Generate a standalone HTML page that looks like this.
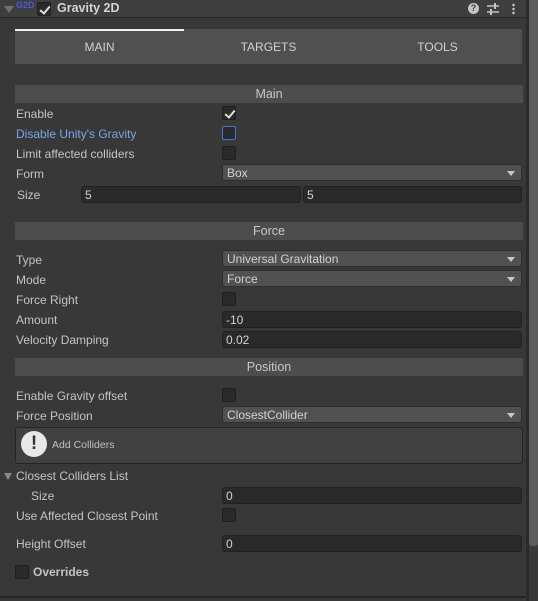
<!DOCTYPE html>
<html><head><style>
*{box-sizing:border-box;margin:0;padding:0}
body{width:538px;height:601px;background:#383838;font-family:"Liberation Sans",sans-serif;font-size:12px;color:#c4c4c4;position:relative;overflow:hidden}
.a{position:absolute}
.lbl{position:absolute;left:16px;line-height:14px}
.hdr{position:absolute;left:15px;width:508px;height:18px;background:#4d4d4d;text-align:center;line-height:18px;color:#c8c8c8;font-size:12.5px}
.cb{position:absolute;left:222px;width:14px;height:14px;background:#2a2a2a;border:1px solid #1f1f1f;border-radius:2px}
.dd{position:absolute;left:222px;width:300px;height:17px;background:#515151;border:1px solid #2e2e2e;border-radius:3px;padding-left:4px;line-height:16px;color:#d2d2d2}
.dd:after{content:"";position:absolute;right:6px;top:6px;border-left:4px solid transparent;border-right:4px solid transparent;border-top:5px solid #c8c8c8}
.tf{position:absolute;width:300px;left:222px;height:17px;background:#2a2a2a;border:1px solid #212121;border-radius:3px;padding-left:3px;line-height:16px;color:#d2d2d2}
.chk:after{content:"";position:absolute;left:4px;top:1px;width:4px;height:8px;border:solid #e0e0e0;border-width:0 2px 2px 0;transform:rotate(40deg)}
</style></head><body>
<div class="a" style="left:0;top:0;width:526px;height:18px;background:#3e3e3e;border-bottom:1px solid #2a2a2a"></div>
<div class="a" style="left:4px;top:6px;border-left:5px solid transparent;border-right:5px solid transparent;border-top:7px solid #707070"></div>
<div class="a" style="left:16px;top:0px;font-size:9px;color:#4a5ad8;font-weight:bold">G2D</div>
<div class="a chk" style="left:37px;top:2px;width:14px;height:14px;background:#2a2a2a;border:1px solid #1f1f1f;border-radius:2px"></div>
<div class="a" style="left:57px;top:1px;font-size:12.5px;font-weight:bold;color:#d4d4d4">Gravity 2D</div>
<div class="a" style="left:468px;top:3px;width:11px;height:11px;border-radius:50%;background:#c4c4c4;color:#3e3e3e;font-size:9px;font-weight:bold;text-align:center;line-height:11px">?</div>
<svg class="a" style="left:487px;top:3px" width="12" height="12"><path d="M0 3h12M0 9h12" stroke="#c4c4c4" stroke-width="1.5"/><rect x="7" y="0" width="2" height="6" fill="#c4c4c4"/><rect x="3" y="6" width="2" height="6" fill="#c4c4c4"/></svg>
<div class="a" style="left:512px;top:3px;width:3px;height:12px;background:radial-gradient(circle,#c4c4c4 1.2px,transparent 1.4px) 0 0/3px 4px"></div>
<div class="a" style="left:526px;top:0;width:3px;height:601px;background:#2b2b2b"></div>
<div class="a" style="left:529px;top:0;width:9px;height:601px;background:#393939"></div>
<div class="a" style="left:529px;top:0;width:9px;height:546px;background:#5c5c5c;border-radius:0 0 3px 3px"></div>
<div class="a" style="left:0;top:596px;width:526px;height:2px;background:#252525"></div>
<div class="a" style="left:15px;top:29px;width:507px;height:35px;background:#505050"></div>
<div class="a" style="left:15px;top:29px;width:169px;height:2px;background:#f0f0f0"></div>
<div class="a" style="left:15px;top:40px;width:169px;text-align:center;color:#d0d0d0">MAIN</div>
<div class="a" style="left:184px;top:40px;width:169px;text-align:center;color:#d0d0d0">TARGETS</div>
<div class="a" style="left:353px;top:40px;width:169px;text-align:center;color:#d0d0d0">TOOLS</div>
<div class="hdr" style="top:85px">Main</div>
<div class="lbl" style="top:107px">Enable</div><div class="cb chk" style="top:106px"></div>
<div class="lbl" style="top:127px;color:#7ba5e6">Disable Unity's Gravity</div><div class="cb" style="top:126px;border-color:#3d7ad0"></div>
<div class="lbl" style="top:147px">Limit affected colliders</div><div class="cb" style="top:146px"></div>
<div class="lbl" style="top:167px">Form</div><div class="dd" style="top:164px">Box</div>
<div class="lbl" style="top:188px;left:17px">Size</div>
<div class="tf" style="left:81px;width:220px;top:186px">5</div><div class="tf" style="left:303px;width:219px;top:186px">5</div>
<div class="hdr" style="top:222px">Force</div>
<div class="lbl" style="top:253px">Type</div><div class="dd" style="top:250px">Universal Gravitation</div>
<div class="lbl" style="top:273px">Mode</div><div class="dd" style="top:270px">Force</div>
<div class="lbl" style="top:293px">Force Right</div><div class="cb" style="top:292px"></div>
<div class="lbl" style="top:313px">Amount</div><div class="tf" style="top:311px">-10</div>
<div class="lbl" style="top:333px">Velocity Damping</div><div class="tf" style="top:331px">0.02</div>
<div class="hdr" style="top:358px">Position</div>
<div class="lbl" style="top:389px">Enable Gravity offset</div><div class="cb" style="top:388px"></div>
<div class="lbl" style="top:409px">Force Position</div><div class="dd" style="top:406px">ClosestCollider</div>
<div class="a" style="left:15px;top:427px;width:508px;height:37px;background:#414141;border:1px solid #242424;border-radius:3px"></div>
<div class="a" style="left:21px;top:431px;width:26px;height:26px;border-radius:50%;background:#e8e8e8;color:#333;font-weight:bold;font-size:19px;text-align:center;line-height:26px">!</div>
<div class="a" style="left:52px;top:439px;font-size:10.5px;color:#c0c0c0">Add Colliders</div>
<div class="a" style="left:4px;top:473px;border-left:4px solid transparent;border-right:4px solid transparent;border-top:7px solid #888"></div>
<div class="lbl" style="top:469px">Closest Colliders List</div>
<div class="lbl" style="top:489px;left:31px">Size</div><div class="tf" style="top:487px">0</div>
<div class="lbl" style="top:509px">Use Affected Closest Point</div><div class="cb" style="top:508px"></div>
<div class="lbl" style="top:537px">Height Offset</div><div class="tf" style="top:535px">0</div>
<div class="cb" style="left:15px;top:565px"></div>
<div class="lbl" style="top:565px;left:33px;font-weight:bold">Overrides</div>
</body></html>
